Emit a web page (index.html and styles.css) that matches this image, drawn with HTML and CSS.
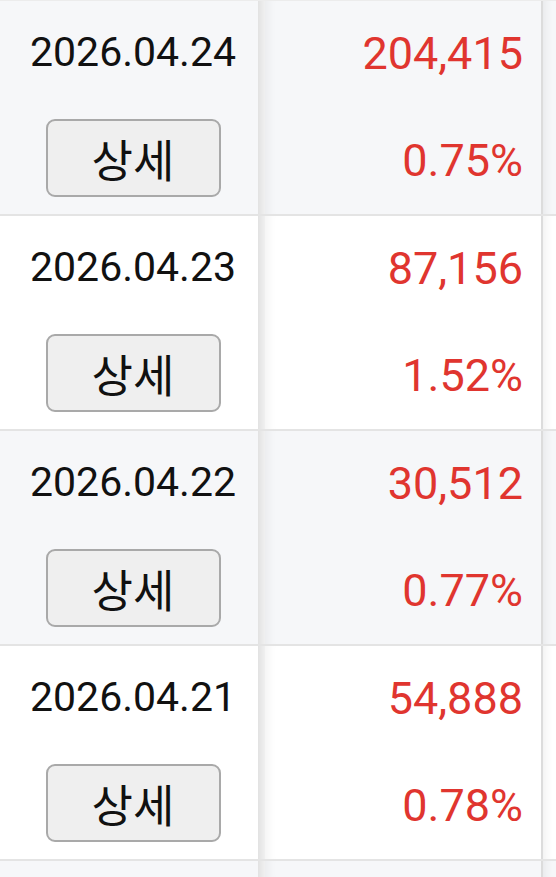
FILE: index.html
```html
<!DOCTYPE html>
<html lang="ko">
<head>
    <meta charset="UTF-8">
    <meta name="viewport" content="width=device-width, initial-scale=1.0">
    <title>일별 내역</title>
    <link rel="stylesheet" href="styles.css">
</head>
<body>
    <div class="table">
        <div class="row odd">
            <div class="cell left">
                <div class="date">2026.04.24</div>
                <button class="detail-btn">상세</button>
            </div>
            <div class="sep"></div>
            <div class="cell right">
                <div class="amount">204,415</div>
                <div class="rate">0.75%</div>
            </div>
            <div class="cell next"></div>
        </div>
        <div class="row">
            <div class="cell left">
                <div class="date">2026.04.23</div>
                <button class="detail-btn">상세</button>
            </div>
            <div class="sep"></div>
            <div class="cell right">
                <div class="amount">87,156</div>
                <div class="rate">1.52%</div>
            </div>
            <div class="cell next"></div>
        </div>
        <div class="row odd">
            <div class="cell left">
                <div class="date">2026.04.22</div>
                <button class="detail-btn">상세</button>
            </div>
            <div class="sep"></div>
            <div class="cell right">
                <div class="amount">30,512</div>
                <div class="rate">0.77%</div>
            </div>
            <div class="cell next"></div>
        </div>
        <div class="row">
            <div class="cell left">
                <div class="date">2026.04.21</div>
                <button class="detail-btn">상세</button>
            </div>
            <div class="sep"></div>
            <div class="cell right">
                <div class="amount">54,888</div>
                <div class="rate">0.78%</div>
            </div>
            <div class="cell next"></div>
        </div>
        <div class="row odd tail">
            <div class="cell left"></div>
            <div class="sep"></div>
            <div class="cell right"></div>
            <div class="cell next"></div>
        </div>
    </div>
</body>
</html>
```

FILE: styles.css
```css
body {
    margin: 0;
    background-color: #ffffff;
    font-family: Roboto, "Noto Sans CJK KR", sans-serif;
    overflow: hidden;
}
.table {
    border-top: 1px solid #ececec;
}
.row {
    display: flex;
    height: 213px;
    border-bottom: 2px solid #e4e4e4;
    background-color: #ffffff;
}
.row.odd {
    background-color: #f6f7f9;
}
.row.tail {
    height: 16px;
    border-bottom: none;
}
.cell {
    box-sizing: border-box;
    display: flex;
    flex-direction: column;
}
.left {
    width: 258px;
    padding-left: 8px;
    align-items: center;
}
.sep {
    width: 7px;
    background: linear-gradient(to right, #e2e2e2, #f0f0f0);
}
.right {
    width: 278px;
    align-items: flex-end;
    padding-right: 18px;
    border-right: 2px solid #dcdcdc;
    box-shadow: inset 14px 0 12px -12px rgba(0, 0, 0, 0.06);
}
.next {
    flex: 1;
    box-shadow: inset 10px 0 10px -8px rgba(0, 0, 0, 0.07);
}
.date {
    margin-top: 23px;
    font-size: 41px;
    line-height: 56px;
    color: #111111;
}
.detail-btn {
    margin-top: 39px;
    width: 175px;
    height: 78px;
    padding: 0;
    background-color: #efefef;
    border: 2px solid #a9a9a9;
    border-radius: 9px;
    font-family: "Noto Sans CJK KR", sans-serif;
    font-size: 45px;
    color: #111111;
}
.amount {
    margin-top: 23px;
    font-size: 45px;
    line-height: 60px;
    color: #e0352f;
}
.rate {
    margin-top: 47px;
    font-size: 45px;
    line-height: 60px;
    color: #e0352f;
}
```
